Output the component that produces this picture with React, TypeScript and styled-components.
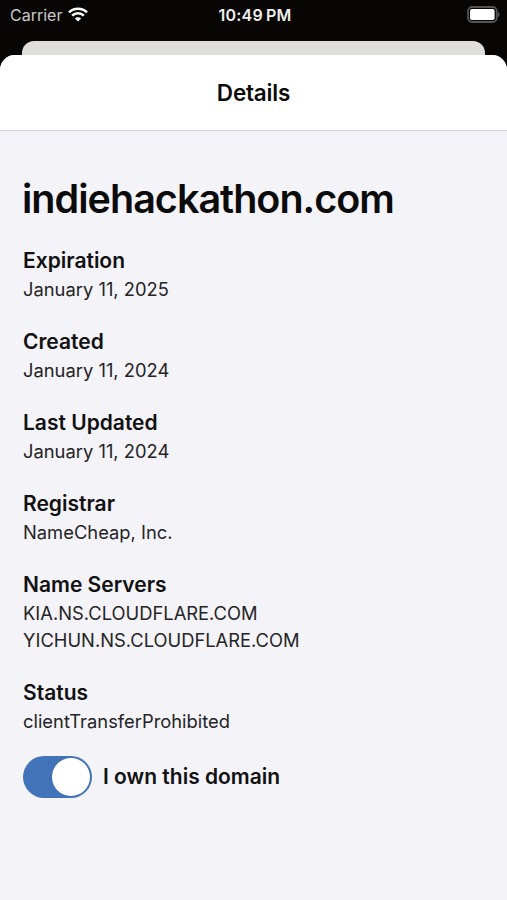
import React from "react";
import styled, { createGlobalStyle } from "styled-components";

const GlobalStyle = createGlobalStyle`
  * { box-sizing: border-box; }
  html, body { margin: 0; background: #070604; }
  body { font-family: Inter, sans-serif; color: #111113; overflow: hidden; }
`;
const Screen = styled.div`
  width: 507px; height: 900px; display: flex; flex-direction: column;
  background: #070604; overflow: hidden;
`;
const StatusBar = styled.div`
  height: 41px; padding: 0 7px 12px 10px; color: #fff;
  display: grid; grid-template-columns: 1fr auto 1fr; align-items: center;
`;
const Carrier = styled.div`
  display: flex; align-items: center; gap: 6px; font-size: 16px; color: #c9c9c8;
`;
const Clock = styled.div`
  font-size: 16px; font-weight: 600; letter-spacing: 0.2px; color: #eeeeec;
  display: flex; gap: 3px;
`;
const Battery = styled.svg`justify-self: end;`;
const BackSheet = styled.div`
  height: 14px; margin: 0 22px; background: #e0dedd; border-radius: 12px 12px 0 0;
`;
const Sheet = styled.main`
  flex: 1; background: #f4f3f8; border-radius: 15px 15px 0 0; overflow: hidden;
`;
const Header = styled.header`
  height: 76px; background: #fff; border-bottom: 1px solid #d0d0d2;
  display: flex; align-items: center; justify-content: center;
`;
const HeaderTitle = styled.h1`
  margin: 0; font-size: 22.5px; font-weight: 600; letter-spacing: -0.2px; color: #0b0b0c;
`;
const Content = styled.div`padding: 43px 22px 0 23px;`;
const Domain = styled.h2`
  margin: 0 0 22px -1px; font-size: 39.5px; line-height: 50px; font-weight: 600;
  letter-spacing: -0.98px; color: #0b0b0c;
`;
const Field = styled.section`
  margin-bottom: 24px;
  &:last-of-type { margin-bottom: 21px; }
`;
const Label = styled.h3`margin: 0; font-size: 21px; line-height: 30px; font-weight: 600;`;
const Value = styled.p`margin: 0; font-size: 18.35px; line-height: 27px; color: #242426;`;
const OwnRow = styled.div`display: flex; align-items: center; gap: 11.5px; margin-left: -0.5px;`;
const Toggle = styled.div`
  width: 69px; height: 42px; border-radius: 21px; background: #4273b8; padding: 2px;
  display: flex; justify-content: flex-end;
`;
const Knob = styled.div`width: 38px; height: 38px; border-radius: 50%; background: #fff;`;

const fields = [
  { label: "Expiration", values: ["January 11, 2025"] },
  { label: "Created", values: ["January 11, 2024"] },
  { label: "Last Updated", values: ["January 11, 2024"] },
  { label: "Registrar", values: ["NameCheap, Inc."] },
  { label: "Name Servers", values: ["KIA.NS.CLOUDFLARE.COM", "YICHUN.NS.CLOUDFLARE.COM"] },
  { label: "Status", values: ["clientTransferProhibited"] },
];

export default function App() {
  return (
    <Screen>
      <GlobalStyle />
      <StatusBar>
        <Carrier>Carrier
          <svg width="20" height="15" viewBox="0 0 20 15" fill="none" stroke="#fff" strokeWidth="2.6">
            <path d="M1 5.4a12.8 12.8 0 0 1 18 0M4.2 8.7a8.2 8.2 0 0 1 11.6 0" />
            <path d="M10 14.6 6.9 11.5a4.4 4.4 0 0 1 6.2 0z" fill="#fff" stroke="none" />
          </svg>
        </Carrier>
        <Clock><span>10:49</span><span>PM</span></Clock>
        <Battery width="33" height="17" viewBox="0 0 33 17">
          <rect x="1" y="1" width="28.8" height="15" rx="4.2" fill="none" stroke="#555" strokeWidth="1.8" />
          <rect x="3" y="3" width="24.6" height="11" rx="1.8" fill="#fff" />
          <path d="M31 6v5c2-.8 2-4.2 0-5" fill="#555" />
        </Battery>
      </StatusBar>
      <BackSheet />
      <Sheet>
        <Header><HeaderTitle>Details</HeaderTitle></Header>
        <Content>
          <Domain>indiehackathon.com</Domain>
          {fields.map((f) => (
            <Field key={f.label}>
              <Label>{f.label}</Label>
              {f.values.map((v) => <Value key={v}>{v}</Value>)}
            </Field>
          ))}
          <OwnRow><Toggle role="switch" aria-checked="true"><Knob /></Toggle><Label>I own this domain</Label></OwnRow>
        </Content>
      </Sheet>
    </Screen>
  );
}
